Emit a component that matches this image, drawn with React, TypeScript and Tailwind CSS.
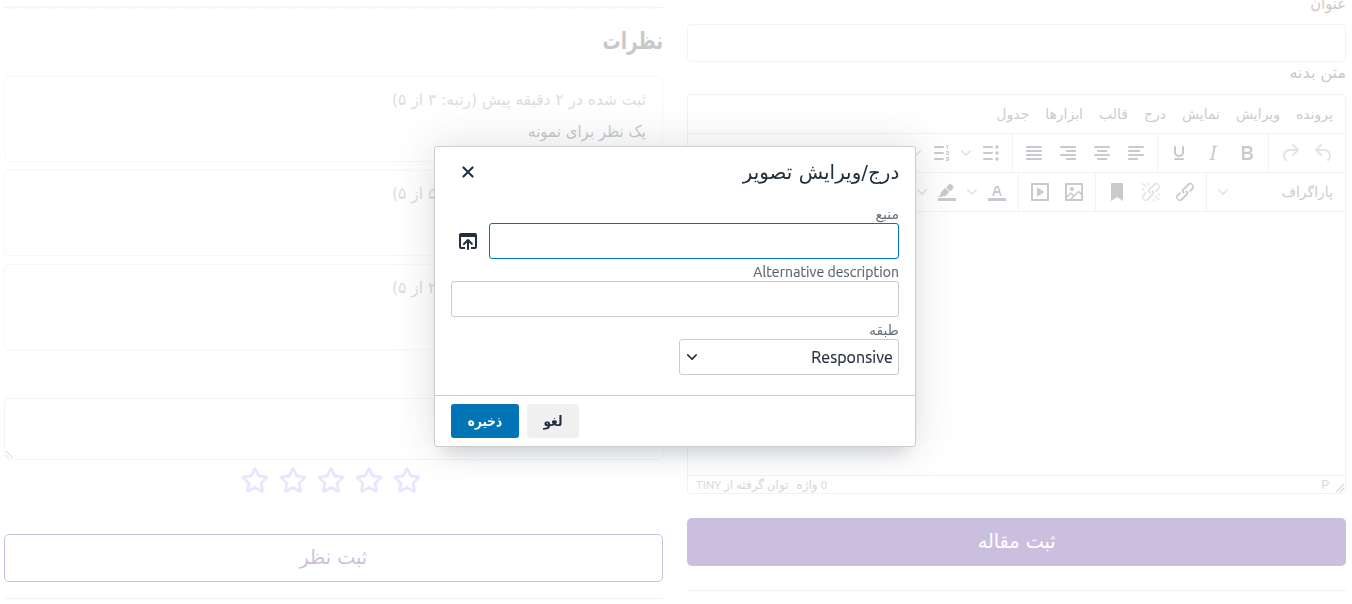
import React from "react";
import { FaRegStar } from "react-icons/fa";

const UI = "font-['DejaVu_Sans',sans-serif]";
const LATIN = "font-['Ubuntu','Noto_Sans',sans-serif] [-webkit-text-stroke:0.2px]";

const icons = {
  undo: "M6.4 8H12c3.7 0 6.2 2 6.8 5.1.6 2.7-.4 5.6-2.3 6.8a1 1 0 0 1-1-1.8c1.1-.6 1.8-2.7 1.4-4.6-.5-2.1-2.1-3.5-4.9-3.5H6.4l3.3 3.3a1 1 0 1 1-1.4 1.4l-5-5a1 1 0 0 1 0-1.4l5-5a1 1 0 0 1 1.4 1.4L6.4 8z",
  redo: "M17.6 10H12c-2.8 0-4.4 1.4-4.9 3.5-.4 2 .3 4 1.4 4.6a1 1 0 1 1-1 1.8c-2-1.2-2.9-4.1-2.3-6.8.6-3 3-5.1 6.8-5.1h5.6l-3.3-3.3a1 1 0 1 1 1.4-1.4l5 5a1 1 0 0 1 0 1.4l-5 5a1 1 0 0 1-1.4-1.4l3.3-3.3z",
  bold: "M7.8 19c-.3 0-.5 0-.6-.2l-.2-.5V5.7c0-.2 0-.4.2-.5l.6-.2h5c1.5 0 2.7.3 3.5 1 .7.6 1.1 1.4 1.1 2.5a3 3 0 0 1-.6 1.9c-.4.6-1 1-1.6 1.2.4.1.9.3 1.3.6s.8.7 1 1.2c.4.4.5 1 .5 1.6 0 1.3-.4 2.3-1.3 3-.8.7-2.1 1-3.8 1H7.8zm5-8.3c.6 0 1.2-.1 1.6-.5.4-.3.6-.7.6-1.3 0-1.1-.8-1.7-2.3-1.7H9.3v3.5h3.4zm.5 6c.7 0 1.3-.1 1.7-.4.4-.4.6-.9.6-1.5s-.2-1-.7-1.4c-.4-.3-1-.4-2-.4H9.4v3.8h4z",
  italic: "M16.7 4.7l-.1.9h-.3c-.6 0-1 0-1.4.3-.3.3-.4.6-.5 1.1l-2.1 9.8v.6c0 .5.4.8 1.4.8h.2l-.2.8H8l.2-.8h.2c1.1 0 1.8-.5 2-1.5l2-9.8.1-.5c0-.6-.4-.8-1.4-.8h-.3l.2-.9h5.8z",
  underline: "M16 5c.6 0 1 .4 1 1v5.5a4 4 0 0 1-.4 1.8l-1 1.4a5.3 5.3 0 0 1-5.5 1 5 5 0 0 1-1.6-1c-.5-.4-.8-.9-1.1-1.4a4 4 0 0 1-.4-1.8V6c0-.6.4-1 1-1s1 .4 1 1v5.5c0 .3 0 .6.2 1l.6.7a3.3 3.3 0 0 0 2.2.8 3.4 3.4 0 0 0 2.2-.8c.3-.2.4-.5.6-.8l.2-.9V6c0-.6.4-1 1-1zM8 17h8c.6 0 1 .4 1 1s-.4 1-1 1H8a1 1 0 0 1 0-2z",
  alignLeft: "M5 5h14c.6 0 1 .4 1 1s-.4 1-1 1H5a1 1 0 1 1 0-2zm0 4h10c.6 0 1 .4 1 1s-.4 1-1 1H5a1 1 0 1 1 0-2zm0 4h14c.6 0 1 .4 1 1s-.4 1-1 1H5a1 1 0 0 1 0-2zm0 4h8c.6 0 1 .4 1 1s-.4 1-1 1H5a1 1 0 0 1 0-2z",
  alignCenter: "M5 5h14c.6 0 1 .4 1 1s-.4 1-1 1H5a1 1 0 1 1 0-2zm3 4h8c.6 0 1 .4 1 1s-.4 1-1 1H8a1 1 0 1 1 0-2zm-3 4h14c.6 0 1 .4 1 1s-.4 1-1 1H5a1 1 0 0 1 0-2zm3 4h8c.6 0 1 .4 1 1s-.4 1-1 1H8a1 1 0 0 1 0-2z",
  alignRight: "M5 5h14c.6 0 1 .4 1 1s-.4 1-1 1H5a1 1 0 1 1 0-2zm6 4h8c.6 0 1 .4 1 1s-.4 1-1 1h-8a1 1 0 0 1 0-2zm-6 4h14c.6 0 1 .4 1 1s-.4 1-1 1H5a1 1 0 0 1 0-2zm6 4h8c.6 0 1 .4 1 1s-.4 1-1 1h-8a1 1 0 0 1 0-2z",
  alignJustify: "M5 5h14a1 1 0 0 1 0 2H5a1 1 0 1 1 0-2zm0 4h14a1 1 0 0 1 0 2H5a1 1 0 1 1 0-2zm0 4h14a1 1 0 0 1 0 2H5a1 1 0 0 1 0-2zm0 4h14a1 1 0 0 1 0 2H5a1 1 0 0 1 0-2z",
  bullets: "M5 5h8a1 1 0 0 1 0 2H5a1 1 0 1 1 0-2zm0 6h8a1 1 0 0 1 0 2H5a1 1 0 1 1 0-2zm0 6h8a1 1 0 0 1 0 2H5a1 1 0 0 1 0-2zM18 4.2a1.8 1.8 0 1 1 0 3.6 1.8 1.8 0 0 1 0-3.6zm0 6a1.8 1.8 0 1 1 0 3.6 1.8 1.8 0 0 1 0-3.6zm0 6a1.8 1.8 0 1 1 0 3.6 1.8 1.8 0 0 1 0-3.6z",
  link: "M6.2 12.3a1 1 0 0 1 1.4 1.4l-2.1 2a2 2 0 1 0 2.7 2.8l4.8-4.8a1 1 0 0 0 0-1.4 1 1 0 1 1 1.4-1.3 2.9 2.9 0 0 1 0 4L9.6 20a3.9 3.9 0 0 1-5.5-5.5l2-2zm11.6-.6a1 1 0 0 1-1.4-1.4l2-2a2 2 0 1 0-2.6-2.8L11 10.3a1 1 0 0 0 0 1.4A1 1 0 1 1 9.6 13a2.9 2.9 0 0 1 0-4L14.4 4a3.9 3.9 0 0 1 5.5 5.5l-2 2z",
  unlink: "M6.2 12.3a1 1 0 0 1 1.4 1.4l-2 2a2 2 0 1 0 2.6 2.8l4.8-4.8a1 1 0 0 0 0-1.4 1 1 0 1 1 1.4-1.3 2.9 2.9 0 0 1 0 4L9.6 20a3.9 3.9 0 0 1-5.5-5.5l2-2zm11.6-.6a1 1 0 0 1-1.4-1.4l2.1-2a2 2 0 1 0-2.7-2.8L11 10.3a1 1 0 0 0 0 1.4A1 1 0 1 1 9.6 13a2.9 2.9 0 0 1 0-4L14.4 4a3.9 3.9 0 0 1 5.5 5.5l-2 2zM7.6 6.3a.8.8 0 0 1-1 1.1L3.3 4.2a.7.7 0 1 1 1-1l3.2 3.1zM5.1 8.6a.8.8 0 0 1 0 1.5H3a.8.8 0 0 1 0-1.5H5zm5-3.5a.8.8 0 0 1-1.5 0V3a.8.8 0 0 1 1.5 0V5zm6 11.8a.8.8 0 0 1 1-1l3.2 3.2a.8.8 0 0 1-1 1L16 17zm-2.2 2a.8.8 0 0 1 1.5 0V21a.8.8 0 0 1-1.5 0V19zm5-3.5a.7.7 0 1 1 0-1.5H21a.8.8 0 0 1 0 1.5H19z",
  bookmark: "M6 4v17l6-4 6 4V4c0-.6-.4-1-1-1H7a1 1 0 0 0-1 1z",
  image: "m5 15.7 3.3-3.2c.3-.3.7-.3 1 0L12 15l4.1-4c.3-.4.8-.4 1 0l2 1.9V5H5v10.7zM5 18V19h3l2.8-2.9-2-2L5 17.9zm14-3-2.5-2.4-6.4 6.5H19v-4zM4 3h16c.6 0 1 .4 1 1v16c0 .6-.4 1-1 1H4a1 1 0 0 1-1-1V4c0-.6.4-1 1-1zm6 8a2 2 0 1 0 0-4 2 2 0 0 0 0 4z",
  media: "M4 3h16c.6 0 1 .4 1 1v16c0 .6-.4 1-1 1H4a1 1 0 0 1-1-1V4c0-.6.4-1 1-1zm1 2v14h14V5H5zm4.8 2.6l5.6 4a.5.5 0 0 1 0 .8l-5.6 4A.5.5 0 0 1 9 16V8a.5.5 0 0 1 .8-.4z",
  textColor: "M3 18h18v3H3zM8.7 16h-.8a.5.5 0 0 1-.5-.6l2.7-9c.1-.3.3-.4.5-.4h2.8c.2 0 .4.1.5.4l2.7 9a.5.5 0 0 1-.5.6h-.8a.5.5 0 0 1-.4-.4l-.7-2.2c0-.3-.3-.4-.5-.4h-3.4c-.2 0-.4.1-.5.4l-.7 2.2c0 .3-.2.4-.4.4zm2.6-7.6l-.6 2a.5.5 0 0 0 .5.6h1.6a.5.5 0 0 0 .5-.6l-.6-2c0-.3-.3-.4-.5-.4h-.4c-.2 0-.4.1-.5.4z",
  highlight: "M3 18h18v3H3zM7.7 16.7H3l3.3-3.3-.7-.8L10.2 8l4 4.1-4 4.2c-.2.2-.6.2-.8 0l-.6-.7-1.1 1.1zm5-7.5L11 7.4l3-2.9a2 2 0 0 1 2.6 0L18 6c.7.7.7 2 0 2.7l-2.9 2.9-1.8-1.8-.5-.6",
  close: "M17.3 8.2 13.4 12l3.9 3.8a1 1 0 0 1-1.5 1.5L12 13.4l-3.8 3.9a1 1 0 0 1-1.5-1.5l3.9-3.8-3.9-3.8a1 1 0 0 1 1.5-1.5l3.8 3.9 3.8-3.9a1 1 0 0 1 1.5 1.5z",
  browse: "M19 4a2 2 0 0 1 2 2v12a2 2 0 0 1-2 2h-4v-2h4V8H5v10h4v2H5a2 2 0 0 1-2-2V6c0-1.1.9-2 2-2h14zm-8 9.4-2.3 2.3a1 1 0 1 1-1.4-1.4l4-4a1 1 0 0 1 1.4 0l4 4a1 1 0 0 1-1.4 1.4L13 13.4V20a1 1 0 0 1-2 0v-6.6z",
};

type IconName = keyof typeof icons;

function Icon({ name }: { name: IconName }) {
  return (
    <svg width="24" height="24" viewBox="0 0 24 24" fill="currentColor" fillRule="evenodd">
      <path d={icons[name]} />
    </svg>
  );
}

function NumberedIcon() {
  return (
    <svg width="24" height="24" viewBox="0 0 24 24" fill="currentColor">
      <path d="M6 5h8a1 1 0 0 1 0 2H6a1 1 0 1 1 0-2zm0 6h8a1 1 0 0 1 0 2H6a1 1 0 1 1 0-2zm0 6h8a1 1 0 0 1 0 2H6a1 1 0 0 1 0-2z" />
      <g transform="translate(13 0)">
        <path d="M6 4v3.5c0 .3-.2.5-.5.5a.5.5 0 0 1-.5-.5V5h-.5a.5.5 0 0 1 0-1H6zm-1 8.8l.2.2h1.3c.3 0 .5.2.5.5s-.2.5-.5.5H4.9a1 1 0 0 1-.9-1V13c0-.4.3-.8.6-1l1.2-.4.2-.3a.2.2 0 0 0-.2-.2H4.5a.5.5 0 0 1-.5-.5c0-.3.2-.5.5-.5h1.6c.5 0 .9.4.9 1v.1c0 .4-.3.8-.6 1l-1.2.4-.2.3zM7 17v2c0 .6-.4 1-1 1H4.5a.5.5 0 0 1 0-1h1.2c.2 0 .3-.1.3-.3 0-.2-.1-.3-.3-.3H4.4a.4.4 0 1 1 0-.8h1.3c.2 0 .3-.1.3-.3 0-.2-.1-.3-.3-.3H4.5a.5.5 0 1 1 0-1H6c.6 0 1 .4 1 1z" />
      </g>
    </svg>
  );
}

function Chevron() {
  return (
    <svg width="10" height="10" viewBox="0 0 10 10" fill="currentColor">
      <path d="M8.7 2.2c.3-.3.8-.3 1 0 .4.4.4.9 0 1.2L5.7 7.8c-.3.3-.9.3-1.2 0L.2 3.4a.8.8 0 0 1 0-1.2c.3-.3.8-.3 1.1 0L5 6l3.7-3.8z" />
    </svg>
  );
}

function Tool({ children, disabled }: { children: React.ReactNode; disabled?: boolean }) {
  return (
    <button className={`flex h-[34px] w-[34px] shrink-0 items-center justify-center ${disabled ? "opacity-50" : ""}`}>
      {children}
    </button>
  );
}

function SplitArrow() {
  return (
    <button className="flex h-[34px] w-4 shrink-0 items-center justify-center opacity-50">
      <Chevron />
    </button>
  );
}

function Group({ children, last }: { children: React.ReactNode; last?: boolean }) {
  return (
    <div className={`flex h-[38px] items-center px-1 ${last ? "" : "border-l border-[#ccc]"}`}>{children}</div>
  );
}

function Comment({ rank, body }: { rank: string; body: string }) {
  return (
    <article className="h-[86px] rounded-[4px] border border-[#dee0e4] px-4 pt-[7px]">
      <p className="h-8 origin-right scale-x-[0.965] whitespace-nowrap text-[16px] leading-8 text-[#6c757d]">
        ثبت شده در ۲ دقیقه پیش (رتبه: {rank} از ۵)
      </p>
      <p className="h-8 origin-right scale-x-[0.938] text-[16px] leading-8 text-[#212529]">{body}</p>
    </article>
  );
}

function Editor() {
  const menus = ["پرونده", "ویرایش", "نمایش", "درج", "قالب", "ابزارها", "جدول"];
  return (
    <div className="flex h-[400px] flex-col overflow-hidden rounded-[4px] border border-[#ccc] text-[#222f3e]">
      <div className="flex h-[38px] shrink-0 items-center gap-4 pr-3 text-[14px]">
        {menus.map((m) => (
          <span key={m}>{m}</span>
        ))}
      </div>
      <div className="flex h-[39px] shrink-0 border-t border-[#ccc]">
        <Group>
          <Tool disabled><Icon name="undo" /></Tool>
          <Tool disabled><Icon name="redo" /></Tool>
        </Group>
        <Group>
          <Tool><Icon name="bold" /></Tool>
          <Tool><Icon name="italic" /></Tool>
          <Tool><Icon name="underline" /></Tool>
        </Group>
        <Group>
          <Tool><Icon name="alignLeft" /></Tool>
          <Tool><Icon name="alignCenter" /></Tool>
          <Tool><Icon name="alignRight" /></Tool>
          <Tool><Icon name="alignJustify" /></Tool>
        </Group>
        <Group last>
          <Tool><Icon name="bullets" /></Tool>
          <SplitArrow />
          <Tool><NumberedIcon /></Tool>
          <SplitArrow />
        </Group>
      </div>
      <div className="flex h-[39px] shrink-0 border-t border-[#ccc]">
        <Group>
          <button className="flex h-[34px] w-[130px] items-center justify-between pl-[7px] pr-2 text-[14px]">
            <span>پاراگراف</span>
            <span className="opacity-50"><Chevron /></span>
          </button>
        </Group>
        <Group>
          <Tool><Icon name="link" /></Tool>
          <Tool disabled><Icon name="unlink" /></Tool>
          <Tool><Icon name="bookmark" /></Tool>
        </Group>
        <Group>
          <Tool><Icon name="image" /></Tool>
          <Tool><Icon name="media" /></Tool>
        </Group>
        <Group last>
          <Tool><Icon name="textColor" /></Tool>
          <SplitArrow />
          <Tool><Icon name="highlight" /></Tool>
          <SplitArrow />
        </Group>
      </div>
      <div className="grow border-t border-[#ccc]" />
      <div className="flex h-[18px] shrink-0 items-center justify-between border-t border-[#ccc] pl-2 text-[12px] text-[#222f3e]/70">
        <div className="flex items-center gap-[6px]">
          <svg className="mt-[6px]" width="10" height="10" viewBox="0 0 10 10" fill="currentColor">
            <path d="M8.1 1.1A.5.5 0 1 1 9 2l-7 7A.5.5 0 1 1 1 8l7-7zM8.1 5.1A.5.5 0 1 1 9 6l-3 3A.5.5 0 1 1 5 8l3-3z" />
          </svg>
          <span className="font-['Ubuntu','Noto_Sans',sans-serif] text-[13px] [-webkit-text-stroke:0.2px]">P</span>
        </div>
        <div className="flex items-center gap-2 whitespace-nowrap font-['Ubuntu','DejaVu_Sans',sans-serif] [-webkit-text-stroke:0.2px]">
          <span>0 واژه</span>
          <span>توان گرفته از TINY</span>
        </div>
      </div>
    </div>
  );
}

function Dialog() {
  return (
    <div className="flex h-[301px] w-[482px] flex-col rounded-[3px] border border-[#ccc] bg-white text-[#222f3e] shadow-[0_16px_16px_-10px_rgba(34,47,62,0.15),0_0_40px_1px_rgba(34,47,62,0.15)]">
      <header className="flex h-[50px] shrink-0 items-center justify-between px-4">
        <h2 className="origin-right scale-x-[0.995] text-[20px] leading-[26px]">درج/ویرایش تصویر</h2>
        <button className="flex h-[34px] w-[34px] items-center justify-center"><Icon name="close" /></button>
      </header>
      <div className="flex grow flex-col gap-1 px-4 pt-2">
        <div>
          <label className="block h-[18px] text-[14px] leading-[18px] text-[#222f3e]/70">منبع</label>
          <div className="flex items-center gap-1">
            <div className="h-9 w-[410px] rounded-[3px] border border-[#0074b4]" />
            <button className="flex h-[34px] w-[34px] items-center justify-center"><Icon name="browse" /></button>
          </div>
        </div>
        <div>
          <label className={`flex h-[18px] text-[14px] leading-[18px] tracking-[0.09px] text-[#222f3e]/70 ${LATIN}`}>
            <span className="whitespace-nowrap">Alternative description</span>
          </label>
          <div className="h-9 rounded-[3px] border border-[#ccc]" />
        </div>
        <div>
          <label className="block h-[18px] text-[14px] leading-[18px] text-[#222f3e]/70">طبقه</label>
          <div className={`flex h-9 w-[220px] items-center justify-between rounded-[3px] border border-[#ccc] pl-[7px] pr-[5px] text-[16px] tracking-[0.08px] ${LATIN}`}>
            <span>Responsive</span>
            <Chevron />
          </div>
        </div>
      </div>
      <footer className="flex h-[51px] shrink-0 items-center justify-end gap-2 border-t border-[#ccc] px-4 text-[14px] font-bold">
        <button className="h-[34px] w-[52px] rounded-[3px] bg-[#f0f0f0]">
          <span className="inline-block scale-x-[0.86]">لغو</span>
        </button>
        <button className="h-[34px] w-[68px] rounded-[3px] bg-[#0074b4] text-white">
          <span className="inline-block scale-x-[0.86]">ذخیره</span>
        </button>
      </footer>
    </div>
  );
}

export default function App() {
  return (
    <div dir="rtl" className={`h-[604px] w-[1352px] overflow-hidden bg-[#fdfdfd] ${UI}`}>
      <main className="flex h-full gap-6 pl-1 pr-[6px]">
        <section className="flex w-[659px] flex-col text-[#212529]">
          <label className="-mt-2 h-8 origin-right scale-x-[0.92] text-[16px] leading-6">عنوان</label>
          <div className="h-[38px] shrink-0 rounded-[4px] border border-[#ced0d4]" />
          <label className="h-8 text-[16px] leading-[22px]">متن بدنه</label>
          <Editor />
          <button className="mt-6 h-12 shrink-0 rounded-[5px] bg-[#310080] pb-[3px] text-[20px] text-white">
            <span className="inline-block scale-x-[0.96]">ثبت مقاله</span>
          </button>
          <hr className="mt-6 border-[#c8c8c8]" />
        </section>
        <section className="flex w-[659px] flex-col text-[#212529]">
          <svg className="-mr-px mt-[6px] shrink-0" width="661" height="3" viewBox="0 0 661 3" stroke="#d8d8d8">
            <path d="M0 1.5h661" strokeWidth="1" />
            <path d="M1.5 1.5h658" strokeWidth="3" strokeLinecap="round" strokeDasharray="0 5" />
          </svg>
          <h2 className="mt-4 h-[51px] origin-right scale-x-[0.76] text-[24px] font-bold leading-[32px]">نظرات</h2>
          <div className="flex flex-col gap-2">
            <Comment rank="۳" body="یک نظر برای نمونه" />
            <Comment rank="۵" body="" />
            <Comment rank="۲" body="" />
          </div>
          <div className="mt-12 flex h-[62px] shrink-0 items-end justify-end rounded-[4px] border border-[#d4d4d8] p-px">
            <svg width="8" height="8" viewBox="0 0 8 8" stroke="#444" strokeWidth="0.9" fill="none">
              <path d="M0 1l7 7M0 5l3 3" />
            </svg>
          </div>
          <div className="mt-[7px] flex h-[26px] shrink-0 justify-center gap-[10px] pr-[5px] text-[#9898ff]">
            {[1, 2, 3, 4, 5].map((n) => (
              <FaRegStar key={n} className="h-[26px] w-7" stroke="currentColor" strokeWidth="8" />
            ))}
          </div>
          <button className="mt-[41px] h-12 shrink-0 rounded-[5px] border border-[#310080] pb-[3px] text-[20px] text-[#310080]">
            <span className="inline-block scale-x-[0.96]">ثبت نظر</span>
          </button>
          <hr className="mt-4 border-[#c8c8c8]" />
        </section>
      </main>
      <div className="fixed inset-0 flex items-start justify-center bg-white/75 pt-[146px] pr-[2px]">
        <Dialog />
      </div>
    </div>
  );
}
